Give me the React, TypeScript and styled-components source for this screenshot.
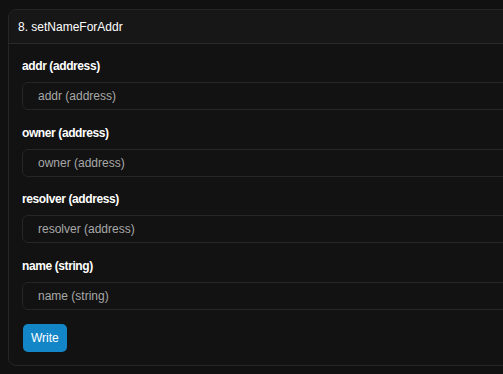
import styled, { createGlobalStyle } from "styled-components";

const GlobalStyle = createGlobalStyle`
  html, body {
    margin: 0;
    padding: 0;
    background: #111111;
    font-family: "Liberation Sans", Arial, sans-serif;
    overflow: hidden;
  }
`;

const Page = styled.div`
  padding: 9px 0 0 8px;
  width: 560px;
`;

const Card = styled.div`
  background: #121212;
  border: 1px solid #262626;
  border-radius: 8px;
  overflow: hidden;
`;

const CardHeader = styled.div`
  height: 33px;
  display: flex;
  align-items: center;
  padding: 0 9px;
  background: #171717;
  border-bottom: 1px solid #2a2a2a;
  color: #ffffff;
  font-size: 12px;
`;

const CardBody = styled.form`
  display: flex;
  flex-direction: column;
  padding: 14px 13px 13px;
`;

const Field = styled.div`
  display: flex;
  flex-direction: column;
  gap: 8px;
  margin-bottom: 14.7px;
`;

const Label = styled.label`
  color: #ffffff;
  font-size: 12px;
  font-weight: 700;
  letter-spacing: -0.4px;
  line-height: 16px;
`;

const Input = styled.input`
  height: 28px;
  box-sizing: border-box;
  padding: 0 15px;
  background: #121212;
  border: 1px solid #262626;
  border-radius: 6px;
  color: #e5e5e5;
  font-family: inherit;
  font-size: 12px;
  outline: none;

  &::placeholder {
    color: #a8a8a8;
  }
`;

const WriteButton = styled.button`
  align-self: flex-start;
  margin-top: -1px;
  margin-left: 1px;
  height: 28px;
  padding: 0 8px;
  background: #1386c8;
  border: none;
  border-radius: 5px;
  color: #ffffff;
  font-family: inherit;
  font-size: 12px;
`;

const inputs = [
  { name: "addr", type: "address" },
  { name: "owner", type: "address" },
  { name: "resolver", type: "address" },
  { name: "name", type: "string" },
];

export default function App() {
  return (
    <>
      <GlobalStyle />
      <Page>
        <Card>
          <CardHeader>8. setNameForAddr</CardHeader>
          <CardBody onSubmit={(e) => e.preventDefault()}>
            {inputs.map((inp) => (
              <Field key={inp.name}>
                <Label>
                  {inp.name} ({inp.type})
                </Label>
                <Input placeholder={`${inp.name} (${inp.type})`} />
              </Field>
            ))}
            <WriteButton type="submit">Write</WriteButton>
          </CardBody>
        </Card>
      </Page>
    </>
  );
}
